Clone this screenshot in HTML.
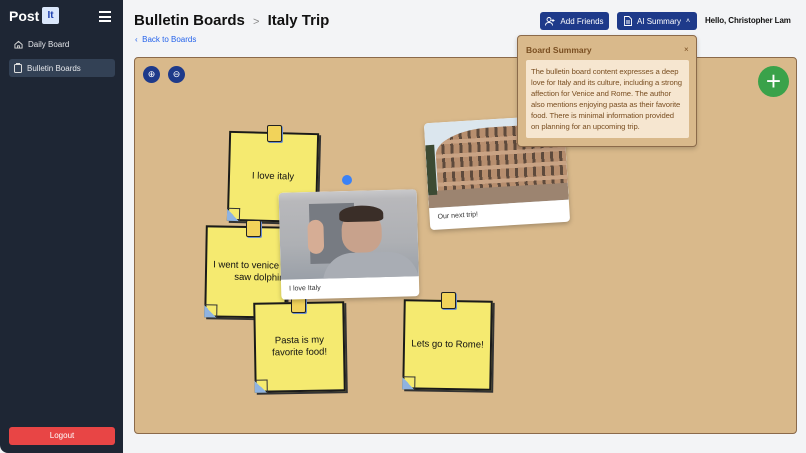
<!DOCTYPE html>
<html><head><meta charset="utf-8"><style>
*{box-sizing:border-box;margin:0;padding:0}
body{width:806px;height:453px;overflow:hidden;background:#f3f4f6;font-family:"Liberation Sans",sans-serif;position:relative}
.abs{position:absolute}
.side{left:0;top:0;width:123px;height:453px;background:#1e2634;border-radius:0 0 0 8px}
.nav{color:#e5e7eb;font-size:8px;display:flex;align-items:center;gap:5px}
.note{position:absolute;background:#f5ea70;border:2px solid #1a1a1a;box-shadow:2px 2px 0 #333;display:flex;align-items:center;justify-content:center;text-align:center;font-size:9.5px;color:#111;padding:6px;line-height:1.25}
.note::after{content:"";position:absolute;left:-2px;bottom:-2px;width:12px;height:12px;background:linear-gradient(45deg,#8fb3e0 50%,transparent 50%);border-top:1px solid #333;border-right:1px solid #333}
.pin{position:absolute;width:15px;height:17px;background:#f2d35a;border:1.5px solid #222;border-radius:2px;box-shadow:1px 1px 0 #6a8fd0}
.photo{position:absolute;background:#fff;border-radius:4px;box-shadow:0 2px 5px rgba(0,0,0,.25);overflow:hidden}
.cap{font-size:7px;color:#333;padding:6px 8px}
.btn{position:absolute;background:#1e3a8a;color:#fff;font-size:8px;border-radius:3px;display:flex;align-items:center;justify-content:center;gap:5px}
</style></head><body>
<div class="abs side">
  <div class="abs" style="left:9px;top:8px;color:#fff;font-weight:bold;font-size:14px">Post</div>
  <div class="abs" style="left:42px;top:7px;width:17px;height:17px;background:#dbe7fb;color:#1e40af;font-size:10px;font-weight:bold;border-radius:2px;text-align:center;line-height:17px">It</div>
  <div class="abs" style="left:99px;top:11px;width:12px;height:11px;border-top:2px solid #fff;border-bottom:2px solid #fff"><div style="margin-top:2.5px;border-top:2px solid #fff"></div></div>
  <div class="abs nav" style="left:14px;top:40px"><svg width="9" height="9" viewBox="0 0 10 10" fill="none" stroke="#ddd" stroke-width="1"><path d="M1 5L5 1.5 9 5V9H1Z M4 9V6.5h2V9"/></svg>Daily Board</div>
  <div class="abs" style="left:9px;top:59px;width:106px;height:18px;background:#334155;border-radius:3px"></div>
  <div class="abs nav" style="left:14px;top:63px"><svg width="8" height="10" viewBox="0 0 8 10" fill="none" stroke="#ddd" stroke-width="1"><rect x="0.5" y="1.5" width="7" height="8" rx="1"/><path d="M2.5 1.5V.5h3v1"/></svg>Bulletin Boards</div>
  <div class="abs" style="left:9px;top:427px;width:106px;height:18px;background:#e84545;border-radius:3px;color:#fff;font-size:8px;text-align:center;line-height:18px">Logout</div>
</div>
<div class="abs" style="left:134px;top:12px;font-size:15px;font-weight:bold;color:#111">Bulletin Boards <span style="color:#888;font-weight:normal;font-size:11px;margin:0 4px">&gt;</span> Italy Trip</div>
<div class="abs" style="left:135px;top:35px;font-size:8px;color:#2563eb">‹&nbsp; Back to Boards</div>
<div class="btn" style="left:540px;top:12px;width:69px;height:18px"><svg width="10" height="9" viewBox="0 0 10 9" fill="none" stroke="#fff" stroke-width="0.9"><circle cx="4" cy="2.5" r="2"/><path d="M0.5 8.5c0-2 1.5-3 3.5-3s3.5 1 3.5 3M8 2v3M6.5 3.5h3"/></svg>Add Friends</div>
<div class="btn" style="left:617px;top:12px;width:80px;height:18px"><svg width="8" height="10" viewBox="0 0 8 10" fill="none" stroke="#fff" stroke-width="0.9"><path d="M0.5 0.5h4.5l2.5 2.5v6.5h-7z M2 5h4M2 7h4"/></svg>AI Summary <span style="font-size:7px">˄</span></div>
<div class="abs" style="left:705px;top:16px;font-size:8px;font-weight:bold;color:#111;letter-spacing:-0.1px;white-space:nowrap">Hello, Christopher Lam</div>

<div class="abs" style="left:134px;top:57px;width:663px;height:377px;background:#d9b98b;border:1px solid #8b6a4a;border-radius:4px;overflow:hidden">
  <div class="abs" style="left:8px;top:8px;width:17px;height:17px;border-radius:50%;background:#1e3a8a;color:#fff;font-size:9px;text-align:center;line-height:17px">⊕</div>
  <div class="abs" style="left:33px;top:8px;width:17px;height:17px;border-radius:50%;background:#1e3a8a;color:#fff;font-size:9px;text-align:center;line-height:17px">⊖</div>
  <div class="abs" style="left:623px;top:8px;width:31px;height:31px;border-radius:50%;background:#3aa24a;color:#fff;font-size:26px;text-align:center;line-height:30px">+</div>
  <div class="abs" style="left:207px;top:117px;width:10px;height:10px;border-radius:50%;background:#3b82f6"></div>
</div>

<div class="note" style="left:228px;top:132px;width:90px;height:90px;transform:rotate(1.5deg)">I love italy</div>
<div class="pin" style="left:267px;top:125px"></div>
<div class="note" style="left:205px;top:226px;width:82px;height:92px;transform:rotate(1deg);justify-content:flex-start;white-space:nowrap;padding-left:6px"><span>I went to venice and<br>&nbsp;&nbsp;&nbsp;&nbsp;&nbsp;&nbsp;saw dolphins!</span></div>
<div class="pin" style="left:246px;top:220px"></div>
<div class="note" style="left:254px;top:302px;width:91px;height:90px;transform:rotate(-1deg)">Pasta is my favorite food!</div>
<div class="pin" style="left:291px;top:296px"></div>
<div class="note" style="left:403px;top:300px;width:89px;height:90px;transform:rotate(1deg)">Lets go to Rome!</div>
<div class="pin" style="left:441px;top:292px"></div>

<div class="photo" style="left:280px;top:191px;width:138px;height:107px;transform:rotate(-1.5deg)">
  <div style="height:87px;background:linear-gradient(180deg,#c9c9cb 0,#b8b8bb 10%,#aeb0b4 60%,#9aa0a8 100%);position:relative;overflow:hidden">
    <div class="abs" style="left:30px;top:12px;width:45px;height:60px;background:#777b82"></div>
    <div class="abs" style="left:62px;top:20px;width:40px;height:42px;border-radius:45% 45% 40% 40%;background:#c8a28c"></div>
    <div class="abs" style="left:60px;top:15px;width:44px;height:16px;border-radius:50% 50% 20% 20%;background:#3a2e28"></div>
    <div class="abs" style="left:42px;top:62px;width:96px;height:30px;border-radius:30px 30px 0 0;background:#a9adb4"></div>
    <div class="abs" style="left:28px;top:28px;width:16px;height:34px;border-radius:8px;background:#d6ad95"></div>
  </div>
  <div class="cap">I love Italy</div>
</div>
<div class="photo" style="left:427px;top:119px;width:140px;height:107px;transform:rotate(-3.5deg)">
  <div style="height:85px;background:#dbe6ee;position:relative;overflow:hidden">
    <div class="abs" style="left:10px;top:8px;width:140px;height:62px;border-radius:40% 0 0 0;background:repeating-linear-gradient(90deg,#b78e6e 0 6px,#5e4a3c 6px 9px),#b78e6e"></div>
    <div class="abs" style="left:10px;top:8px;width:140px;height:62px;border-radius:40% 0 0 0;background:repeating-linear-gradient(180deg,transparent 0 10px,#c9a384 10px 14px)"></div>
    <div class="abs" style="left:0;top:68px;width:140px;height:17px;background:#9c8470"></div>
    <div class="abs" style="left:0;top:22px;width:9px;height:50px;background:#3c4a33"></div>
  </div>
  <div class="cap">Our next trip!</div>
</div>

<div class="abs" style="left:517px;top:35px;width:180px;height:112px;background:#d9b98b;border:1.5px solid #8b6a4a;border-radius:4px;box-shadow:0 2px 5px rgba(0,0,0,.2)">
  <div class="abs" style="left:8px;top:9px;font-size:8.5px;font-weight:bold;color:#7a4f22">Board Summary</div>
  <div class="abs" style="left:166px;top:9px;font-size:8px;color:#7a4f22">×</div>
  <div class="abs" style="left:8px;top:24px;width:163px;height:78px;background:#f6e6d0;border-radius:2px;padding:6px 5px;font-size:7.7px;line-height:11px;color:#7a4f22;letter-spacing:-0.1px">The bulletin board content expresses a deep love for Italy and its culture, including a strong affection for Venice and Rome. The author also mentions enjoying pasta as their favorite food. There is minimal information provided on planning for an upcoming trip.</div>
</div>
</body></html>
